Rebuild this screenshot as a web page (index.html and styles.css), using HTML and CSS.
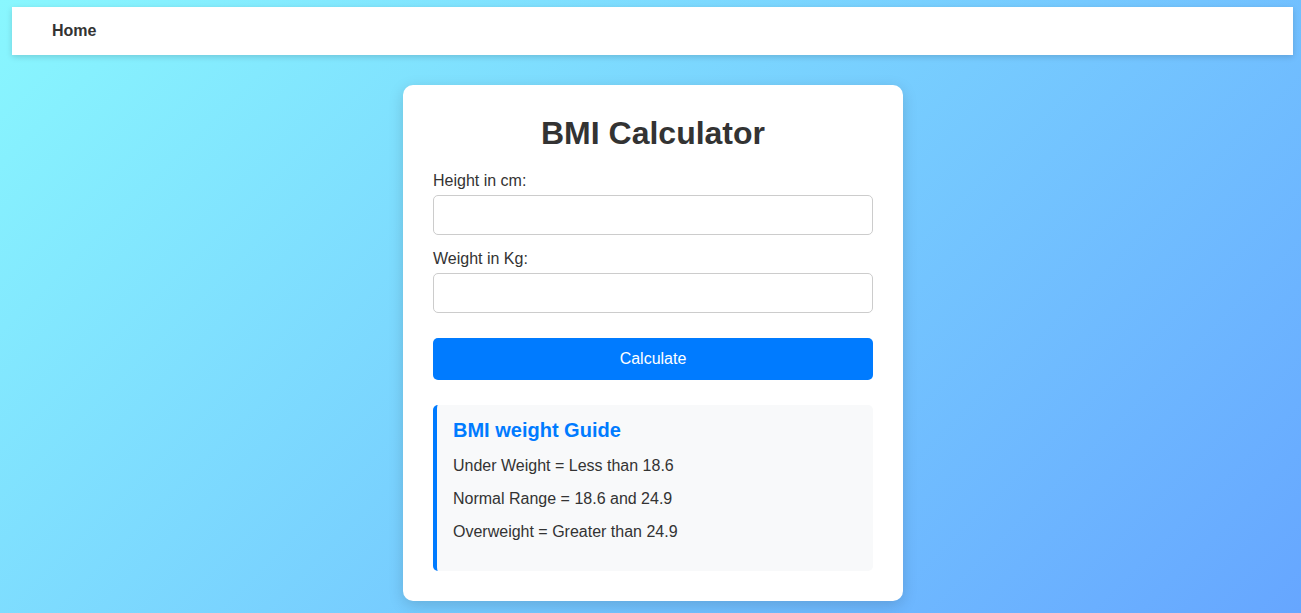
FILE: index.html
```html
<!DOCTYPE html>
<html lang="en">
<head>
<meta charset="UTF-8">
<title>BMI Calculator</title>
<link rel="stylesheet" href="styles.css">
</head>
<body>
<nav class="navbar">
  <a class="nav-link" href="#">Home</a>
</nav>
<main class="page">
  <section class="card">
    <h1 class="title">BMI Calculator</h1>
    <label class="label" for="height">Height in cm:</label>
    <input class="input" id="height" type="text">
    <label class="label" for="weight">Weight in Kg:</label>
    <input class="input" id="weight" type="text">
    <button class="btn" type="button">Calculate</button>
    <div class="guide">
      <h3 class="guide-title">BMI weight Guide</h3>
      <p class="guide-item">Under Weight = Less than 18.6</p>
      <p class="guide-item">Normal Range = 18.6 and 24.9</p>
      <p class="guide-item">Overweight = Greater than 24.9</p>
    </div>
  </section>
</main>
</body>
</html>
```
FILE: styles.css
```css
* { box-sizing: border-box; }
html, body { height: 100%; }
body {
  margin: 0;
  padding: 7px 8px 0 12px;
  font-family: "Liberation Sans", Arial, sans-serif;
  color: #333;
  background: linear-gradient(135deg, #89f7fe 0%, #66a6ff 100%);
  min-height: 613px;
  overflow: hidden;
}
.navbar {
  background: #fff;
  height: 48px;
  padding: 0 40px;
  display: flex;
  align-items: center;
  box-shadow: 0 2px 6px rgba(0,0,0,0.15);
}
.nav-link {
  color: #333;
  font-weight: bold;
  font-size: 16px;
  text-decoration: none;
}
.page {
  display: flex;
  justify-content: center;
  padding-top: 30px;
  padding-left: 1px;
}
.card {
  width: 500px;
  background: #fff;
  border-radius: 10px;
  padding: 30px;
  display: flex;
  flex-direction: column;
  box-shadow: 0 4px 15px rgba(0,0,0,0.15);
}
.title {
  margin: 0 0 20px;
  text-align: center;
  font-size: 32px;
  line-height: 37px;
  color: #333;
}
.label {
  font-size: 16px;
  line-height: 18px;
  margin-bottom: 5px;
}
.input {
  height: 40px;
  border: 1px solid #ccc;
  border-radius: 5px;
  margin: 0 0 15px;
  font-size: 16px;
  padding: 0 10px;
}
.btn {
  margin-top: 10px;
  height: 42px;
  border: none;
  border-radius: 5px;
  background: #007bff;
  color: #fff;
  font-size: 16px;
  font-family: "Liberation Sans", Arial, sans-serif;
}
.guide {
  margin-top: 25px;
  background: #f8f9fa;
  border-left: 4px solid #007bff;
  border-radius: 5px;
  padding: 14px 16px 15px;
}
.guide-title {
  margin: 0 0 15px;
  font-size: 20px;
  line-height: 23px;
  color: #007bff;
}
.guide-item {
  margin: 0 0 15px;
  font-size: 16px;
  line-height: 18px;
}
```
